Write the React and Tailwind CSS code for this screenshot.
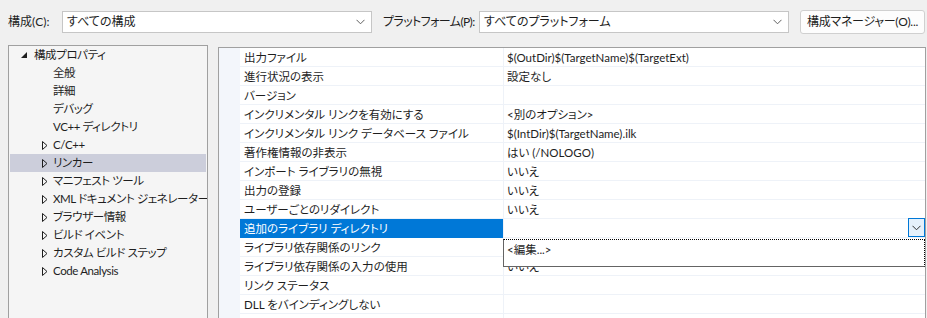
import React from "react";

const font = {
  fontFamily: '"Lato", "Noto Sans CJK JP", sans-serif',
};

const treeItems = [
  { label: "構成プロパティ", level: 0, open: true },
  { label: "全般", level: 1 },
  { label: "詳細", level: 1 },
  { label: "デバッグ", level: 1 },
  { label: "VC++ ディレクトリ", level: 1 },
  { label: "C/C++", level: 1, arrow: true },
  { label: "リンカー", level: 1, arrow: true, selected: true },
  { label: "マニフェスト ツール", level: 1, arrow: true },
  { label: "XML ドキュメント ジェネレーター", level: 1, arrow: true },
  { label: "ブラウザー情報", level: 1, arrow: true },
  { label: "ビルド イベント", level: 1, arrow: true },
  { label: "カスタム ビルド ステップ", level: 1, arrow: true },
  { label: "Code Analysis", level: 1, arrow: true },
];

// the value under the open dropdown is hidden by it
const props = [
  ["出力ファイル", "$(OutDir)$(TargetName)$(TargetExt)"],
  ["進行状況の表示", "設定なし"],
  ["バージョン", ""],
  ["インクリメンタル リンクを有効にする", "<別のオプション>"],
  ["インクリメンタル リンク データベース ファイル", "$(IntDir)$(TargetName).ilk"],
  ["著作権情報の非表示", "はい (/NOLOGO)"],
  ["インポート ライブラリの無視", "いいえ"],
  ["出力の登録", "いいえ"],
  ["ユーザーごとのリダイレクト", "いいえ"],
  ["追加のライブラリ ディレクトリ", "", true],
  ["ライブラリ依存関係のリンク", ""],
  ["ライブラリ依存関係の入力の使用", "いいえ"],
  ["リンク ステータス", ""],
  ["DLL をバインディングしない", ""],
  ["", ""],
];

function Chevron({ color = "#606060" }) {
  return (
    <svg width="9" height="6" viewBox="0 0 9 6">
      <path d="M0.5 0.8 L4.5 4.8 L8.5 0.8" fill="none" stroke={color} strokeWidth="1" />
    </svg>
  );
}

function Combo({ text, width }) {
  return (
    <div
      className="shrink-0 h-[22px] bg-white border border-[#c6c6c6] flex items-center justify-between pl-[4px] pr-[6px]"
      style={{ width }}
    >
      <span className="text-[12px] text-[#1e1e1e] whitespace-nowrap">{text}</span>
      <Chevron />
    </div>
  );
}

function TreeRow({ item }) {
  return (
    <div
      className={
        "h-[18px] mx-[1px] flex items-center text-[11.5px] tracking-[-0.4px] text-[#1e1e1e] whitespace-nowrap " +
        (item.selected ? "bg-[#cccedb]" : "")
      }
    >
      {item.level === 0 ? (
        <>
          <div className="shrink-0 w-[20px] flex justify-end pr-[3px]">
            <svg width="6" height="6" viewBox="0 0 6 6">
              <path d="M6 0 L6 6 L0 6 Z" fill="#1e1e1e" />
            </svg>
          </div>
          <span className="ml-[4px]">{item.label}</span>
        </>
      ) : (
        <>
          <div className="shrink-0 w-[43px] flex justify-end pr-[5px]">
            {item.arrow && (
              <svg width="6" height="9" viewBox="0 0 6 9">
                <path d="M0.5 0.5 L5 4.5 L0.5 8.5 Z" fill="none" stroke="#1e1e1e" strokeWidth="1" />
              </svg>
            )}
          </div>
          <span>{item.label}</span>
        </>
      )}
    </div>
  );
}

export default function App() {
  return (
    <div
      className="w-[927px] h-[318px] bg-[#f0f0f0] overflow-hidden [font-feature-settings:'palt']"
      style={font}
    >
      {/* toolbar */}
      <div className="h-[45px] flex items-center pl-[8px] pb-[1px] text-[12px] text-[#1e1e1e] whitespace-nowrap">
        <span className="shrink-0 w-[54px]">構成(C):</span>
        <Combo text="すべての構成" width={310} />
        <span className="shrink-0 ml-[11px] w-[96px] tracking-[-0.6px]">プラットフォーム(P):</span>
        <Combo text="すべてのプラットフォーム" width={310} />
        <div className="shrink-0 ml-[11px] w-[125px] h-[24px] rounded-[3px] border border-[#d0d0d0] bg-[#fdfdfd] flex items-center justify-center tracking-[-0.3px]">
          構成マネージャー(O)...
        </div>
      </div>

      <div className="flex items-start">
        {/* tree */}
        <div className="ml-[8px] w-[200px] h-[300px] bg-[#f5f5f5] border border-[#a0a0a0] overflow-hidden">
          {treeItems.map((it, i) => (
            <TreeRow key={i} item={it} />
          ))}
        </div>

        {/* property grid */}
        <div className="relative ml-[10px] mt-[2px] w-[708px] h-[300px] bg-white border border-[#a0a0a0]">
          {props.map(([name, value, sel], i) => (
            <div key={i} className="flex h-[19px] text-[11.5px] whitespace-nowrap">
              <div className="w-[21px] bg-[#f3f6fb]" />
              <div
                className={
                  "w-[263px] pl-[4px] pt-[1px] border-b leading-[17px] " +
                  (sel ? "bg-[#0078d7] text-white border-[#0078d7]" : "text-[#1e1e1e] border-[#eef2f8]")
                }
              >
                {name}
              </div>
              <div className="flex-1 flex border-l border-b border-[#eef2f8] pl-[3px] pt-[1px] leading-[17px] text-[#1e1e1e]">
                <span className="flex-1">{value}</span>
                {sel && (
                  <div className="w-[17px] h-[19px] -mt-[2px] bg-[#e5f1fb] border border-[#0078d7] flex items-center justify-center">
                    <Chevron color="#303030" />
                  </div>
                )}
              </div>
            </div>
          ))}

          {/* dropdown popup */}
          <div className="absolute left-[284px] top-[191px] w-[422px] h-[28px] bg-white border border-[#646464] [border-top-style:dotted] [border-right-style:dotted] [border-top-color:#000] [border-right-color:#000] text-[11.5px] text-[#1e1e1e] pl-[3px] pt-[1px] leading-[17px]">
            &lt;編集...&gt;
          </div>
        </div>
      </div>
    </div>
  );
}
